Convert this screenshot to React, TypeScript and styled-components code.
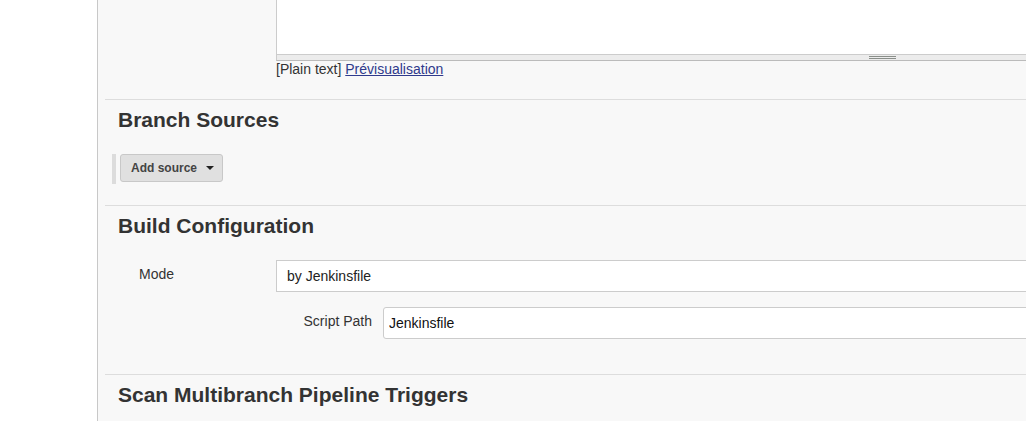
import React from "react";
import styled, { createGlobalStyle } from "styled-components";

const GlobalStyle = createGlobalStyle`
  html, body {
    margin: 0;
    padding: 0;
    overflow: hidden;
  }
  body {
    font-family: "Liberation Sans", Arial, Helvetica, sans-serif;
    font-size: 14px;
    color: #333;
    background: #fff;
  }
`;

export default function App() {
  return (
    <>
      <GlobalStyle />
      <Page>
        <SidePanel />
        <Main>
          {/* description block, scrolled half out of view */}
          <TopBlock>
            <FormRow>
              <Label />
              <Field>
                <TextArea />
                <ResizeBar>
                  <Grip />
                </ResizeBar>
                <Preview>
                  [Plain text] <PreviewLink href="#">Prévisualisation</PreviewLink>
                </Preview>
              </Field>
            </FormRow>
          </TopBlock>

          <Section $bottom={21}>
            <SectionTitle>Branch Sources</SectionTitle>
            <HeteroList>
              <AddButton type="button">
                Add source
                <Caret />
              </AddButton>
            </HeteroList>
          </Section>

          <Section $bottom={35}>
            <SectionTitle>Build Configuration</SectionTitle>
            <FormRow $top={22}>
              <Label>Mode</Label>
              <Field>
                <SelectBox>by Jenkinsfile</SelectBox>
                <SubRow>
                  <SubLabel>Script Path</SubLabel>
                  <TextInput readOnly defaultValue="Jenkinsfile" />
                </SubRow>
              </Field>
            </FormRow>
          </Section>

          <Section $bottom={40}>
            <SectionTitle>Scan Multibranch Pipeline Triggers</SectionTitle>
          </Section>
        </Main>
      </Page>
    </>
  );
}

const Page = styled.div`
  display: flex;
  width: 1026px;
  height: 421px;
  overflow: hidden;
`;

const SidePanel = styled.aside`
  flex: 0 0 97px;
  background: #fff;
  border-right: 1px solid #c8c8c8;
`;

const Main = styled.main`
  flex: 0 0 auto;
  width: 1500px;
  padding-left: 7px;
  background: #f8f8f8;
`;

const TopBlock = styled.div`
  margin-top: -40px;
  padding-bottom: 21px;
`;

const FormRow = styled.div<{ $top?: number }>`
  display: grid;
  grid-template-columns: 171px 1211px;
  margin-top: ${(p) => p.$top ?? 0}px;
`;

const Label = styled.div`
  padding: 6px 0 0 34px;
  line-height: 17px;
  font-size: 14px;
  color: #333;
`;

const Field = styled.div`
  display: flex;
  flex-direction: column;
`;

const TextArea = styled.div`
  height: 93px;
  background: #fff;
  border: 1px solid #ccc;
  border-bottom: none;
`;

const ResizeBar = styled.div`
  height: 4px;
  background: #ececec;
  border-top: 1px solid #ccc;
  border-bottom: 1px solid #bbb;
  border-left: 1px solid #ccc;
  display: flex;
  justify-content: center;
  padding-top: 1px;
  box-sizing: content-box;
`;

const Grip = styled.div`
  width: 27px;
  height: 1px;
  border-top: 1px solid #8a8f8a;
  border-bottom: 1px solid #8a8f8a;
`;

const Preview = styled.div`
  line-height: 17px;
  font-size: 14px;
  color: #333;
`;

const PreviewLink = styled.a`
  color: #2f3a8c;
  text-decoration: underline;
`;

const Section = styled.section<{ $bottom: number }>`
  border-top: 1px solid #ddd;
  padding-top: 8px;
  padding-bottom: ${(p) => p.$bottom}px;
`;

const SectionTitle = styled.h2`
  margin: 0;
  padding-left: 13px;
  font-size: 21px;
  line-height: 24px;
  font-weight: bold;
  color: #333;
`;

const HeteroList = styled.div`
  display: flex;
  margin: 22px 0 0 7px;
  padding: 0 0 2px 4px;
  border-left: 4px solid #dcdcdc;
  width: max-content;
`;

const AddButton = styled.button`
  display: flex;
  align-items: center;
  box-sizing: border-box;
  width: 103px;
  height: 28px;
  padding: 0 0 1px 10px;
  background: #e0e0e0;
  border: 1px solid #c8c8c8;
  border-radius: 3px;
  font-family: "Liberation Sans", Arial, sans-serif;
  font-size: 12px;
  font-weight: bold;
  color: #444;
`;

const Caret = styled.span`
  margin-left: 9px;
  margin-top: 1px;
  width: 0;
  height: 0;
  border-left: 4px solid transparent;
  border-right: 4px solid transparent;
  border-top: 4px solid #222;
`;

const SelectBox = styled.div`
  box-sizing: border-box;
  height: 32px;
  padding-left: 10px;
  line-height: 30px;
  background: #fff;
  border: 1px solid #ccc;
  font-size: 14px;
  color: #222;
`;

const SubRow = styled.div`
  display: grid;
  grid-template-columns: 107px 1fr;
  margin-top: 15px;
`;

const SubLabel = styled.div`
  padding: 6px 11px 0 0;
  text-align: right;
  line-height: 17px;
  font-size: 14px;
  color: #333;
`;

const TextInput = styled.input`
  box-sizing: border-box;
  height: 32px;
  padding: 0 5px;
  background: #fff;
  border: 1px solid #ccc;
  border-radius: 3px;
  font-family: "Liberation Sans", Arial, sans-serif;
  font-size: 14px;
  color: #111;
  outline: none;
`;
